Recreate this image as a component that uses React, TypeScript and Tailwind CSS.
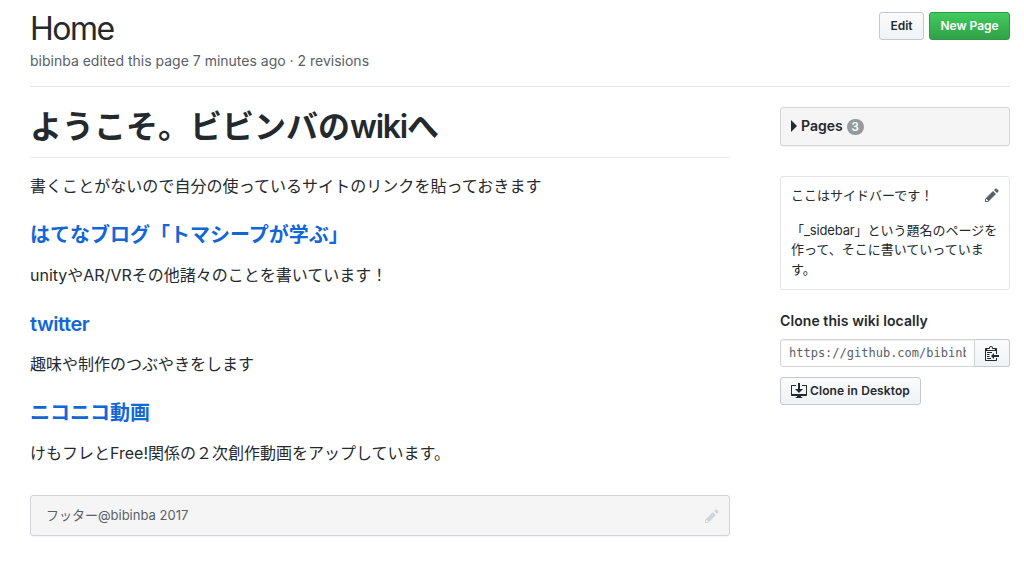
import React from 'react'

interface IconProps {
  className?: string
}

function PencilIcon({ className = '' }: IconProps) {
  return (
    <svg className={className} width="14" height="16" viewBox="0 0 14 16" fill="currentColor" aria-hidden="true">
      <path fillRule="evenodd" d="M0 12v3h3l8-8-3-3L0 12zm3 2H1v-2h1v1h1v1zm10.3-9.3L12 6 9 3l1.3-1.3a.996.996 0 0 1 1.41 0l1.59 1.59c.39.39.39 1.02 0 1.41z" />
    </svg>
  )
}

function ClippyIcon() {
  return (
    <svg width="14" height="16" viewBox="0 0 14 16" fill="currentColor" aria-hidden="true">
      <path fillRule="evenodd" d="M2 13h4v1H2v-1zm5-6H2v1h5V7zm2 3V8l-3 3 3 3v-2h5v-2H9zM4.5 9H2v1h2.5V9zM2 12h2.5v-1H2v1zm9 1h1v2c-.02.28-.11.52-.3.7-.19.18-.42.28-.7.3H1c-.55 0-1-.45-1-1V4c0-.55.45-1 1-1h3c0-1.11.89-2 2-2 1.11 0 2 .89 2 2h3c.55 0 1 .45 1 1v5h-1V6H1v9h10v-2zM2 5h8c0-.55-.45-1-1-1H8c-.55 0-1-.45-1-1s-.45-1-1-1-1 .45-1 1-.45 1-1 1H3c-.55 0-1 .45-1 1z" />
    </svg>
  )
}

function DesktopDownloadIcon() {
  return (
    <svg width="16" height="16" viewBox="0 0 16 16" fill="currentColor" aria-hidden="true">
      <path fillRule="evenodd" d="M4 6h3V0h2v6h3l-4 4-4-4zm11-4h-4v1h4v8H1V3h4V2H1c-.55 0-1 .45-1 1v9c0 .55.45 1 1 1h5.34c-.25.61-.86 1.39-2.34 2h8c-1.48-.61-2.09-1.39-2.34-2H15c.55 0 1-.45 1-1V3c0-.55-.45-1-1-1z" />
    </svg>
  )
}

const links = [
  { title: 'はてなブログ「トマシープが学ぶ」', text: 'unityやAR/VRその他諸々のことを書いています！', tracking: '' },
  { title: 'twitter', text: '趣味や制作のつぶやきをします', tracking: 'tracking-[-0.45px]' },
  { title: 'ニコニコ動画', text: 'けもフレとFree!関係の２次創作動画をアップしています。', tracking: '' },
]

function Header() {
  return (
    <header className="flex h-[87px] justify-between border-b border-[#e1e4e8] pt-2">
      <div>
        <h1 className="pt-px text-[32px] leading-10 tracking-[-1.5px]">Home</h1>
        <p className="mt-0.5 text-sm leading-5 text-[#586069]">bibinba edited this page 7 minutes ago · 2 revisions</p>
      </div>
      <div className="flex gap-[5px] pt-1 text-xs font-semibold">
        <button className="h-7 w-[45px] rounded-[3px] border border-[#c6c9cc] bg-linear-to-b from-[#fafbfc] to-[#eff3f6]">Edit</button>
        <button className="h-7 w-[81px] rounded-[3px] border border-[#35934c] bg-linear-to-b from-[#40cb5e] to-[#30a148] text-white">New Page</button>
      </div>
    </header>
  )
}

function Sidebar() {
  return (
    <aside className="w-[230px] pt-5">
      <div className="flex h-[39px] items-center rounded-[3px] border border-[#d5d5d5] bg-[#f5f5f5] pb-0.5 pl-2.5 shadow-[0_1px_1px_rgba(0,0,0,0.05)]">
        <svg width="6" height="12" viewBox="0 0 6 12" fill="currentColor" aria-hidden="true">
          <path d="M0 0l6 6-6 6z" />
        </svg>
        <span className="ml-1 text-sm font-semibold">Pages</span>
        <span className="mt-0.5 ml-1 flex h-4 w-[17px] items-center justify-center rounded-full bg-[#959a9e] text-xs font-semibold text-white">3</span>
      </div>

      <div className="relative mt-[30px] h-[114px] rounded-[3px] border border-[#e1e4e8] px-2.5 pt-[9px] text-[13px] leading-[19.5px]">
        <PencilIcon className="absolute top-2.5 right-2.5 text-[#586069]" />
        <p>ここはサイドバーです！</p>
        <p className="mt-[15px]">
          「<span className="tracking-[-0.15px]">_sidebar</span>」という題名のページを作って、そこに書いていっています。
        </p>
      </div>

      <h3 className="mt-[21px] text-sm leading-5 font-semibold tracking-[0.08px]">Clone this wiki locally</h3>
      <div className="mt-2 flex h-7">
        <input
          className="w-[195px] rounded-l-[3px] border border-[#d1d5da] px-2 font-['DejaVu_Sans_Mono',monospace] text-xs leading-5 text-[#586069] shadow-[inset_0_1px_2px_rgba(27,31,35,0.075)]"
          type="text"
          value="https://github.com/bibinba"
          readOnly
        />
        <button className="flex w-[35px] items-center justify-center rounded-r-[3px] border border-l-0 border-[#c6c9cc] bg-linear-to-b from-[#fafbfc] to-[#eff3f6]">
          <ClippyIcon />
        </button>
      </div>
      <button className="mt-2.5 flex h-7 w-[141px] items-center gap-[3px] rounded-[3px] border border-[#c6c9cc] bg-linear-to-b from-[#fafbfc] to-[#eff3f6] pl-2.5 text-xs font-semibold tracking-[0.1px] whitespace-nowrap">
        <DesktopDownloadIcon />
        Clone in Desktop
      </button>
    </aside>
  )
}

export default function App() {
  return (
    <div className="h-[566px] overflow-hidden bg-white px-[30px] font-['Inter','Noto_Sans_CJK_JP',sans-serif] text-[#24292e]">
      <div className="w-[980px]">
        <Header />
        <div className="flex justify-between">
          <main className="w-[700px]">
            <h1 className="mt-5 h-[51px] border-b border-[#eaecef] text-[32px] leading-10 font-semibold">
              ようこそ。ビビンバの<span className="tracking-[-1.2px]">wiki</span>へ
            </h1>
            <p className="mt-4 text-base leading-6 tracking-[0.05px]">書くことがないので自分の使っているサイトのリンクを貼っておきます</p>
            {links.map((link) => (
              <section key={link.title}>
                <h3 className={`mt-[25px] text-xl leading-[25px] font-semibold text-[#1366d6] ${link.tracking}`}>{link.title}</h3>
                <p className="mt-[15px] text-base leading-6">{link.text}</p>
              </section>
            ))}
            <footer className="mt-[30px] flex h-[41px] items-center justify-between rounded-[3px] border border-[#d1d5da] bg-[#f5f5f5] pr-2.5 pl-[15px] text-[13px] text-[#586069] shadow-[0_1px_1px_rgba(0,0,0,0.05)]">
              <span>フッター@bibinba 2017</span>
              <PencilIcon className="text-[#d1d5da]" />
            </footer>
          </main>
          <Sidebar />
        </div>
      </div>
    </div>
  )
}
